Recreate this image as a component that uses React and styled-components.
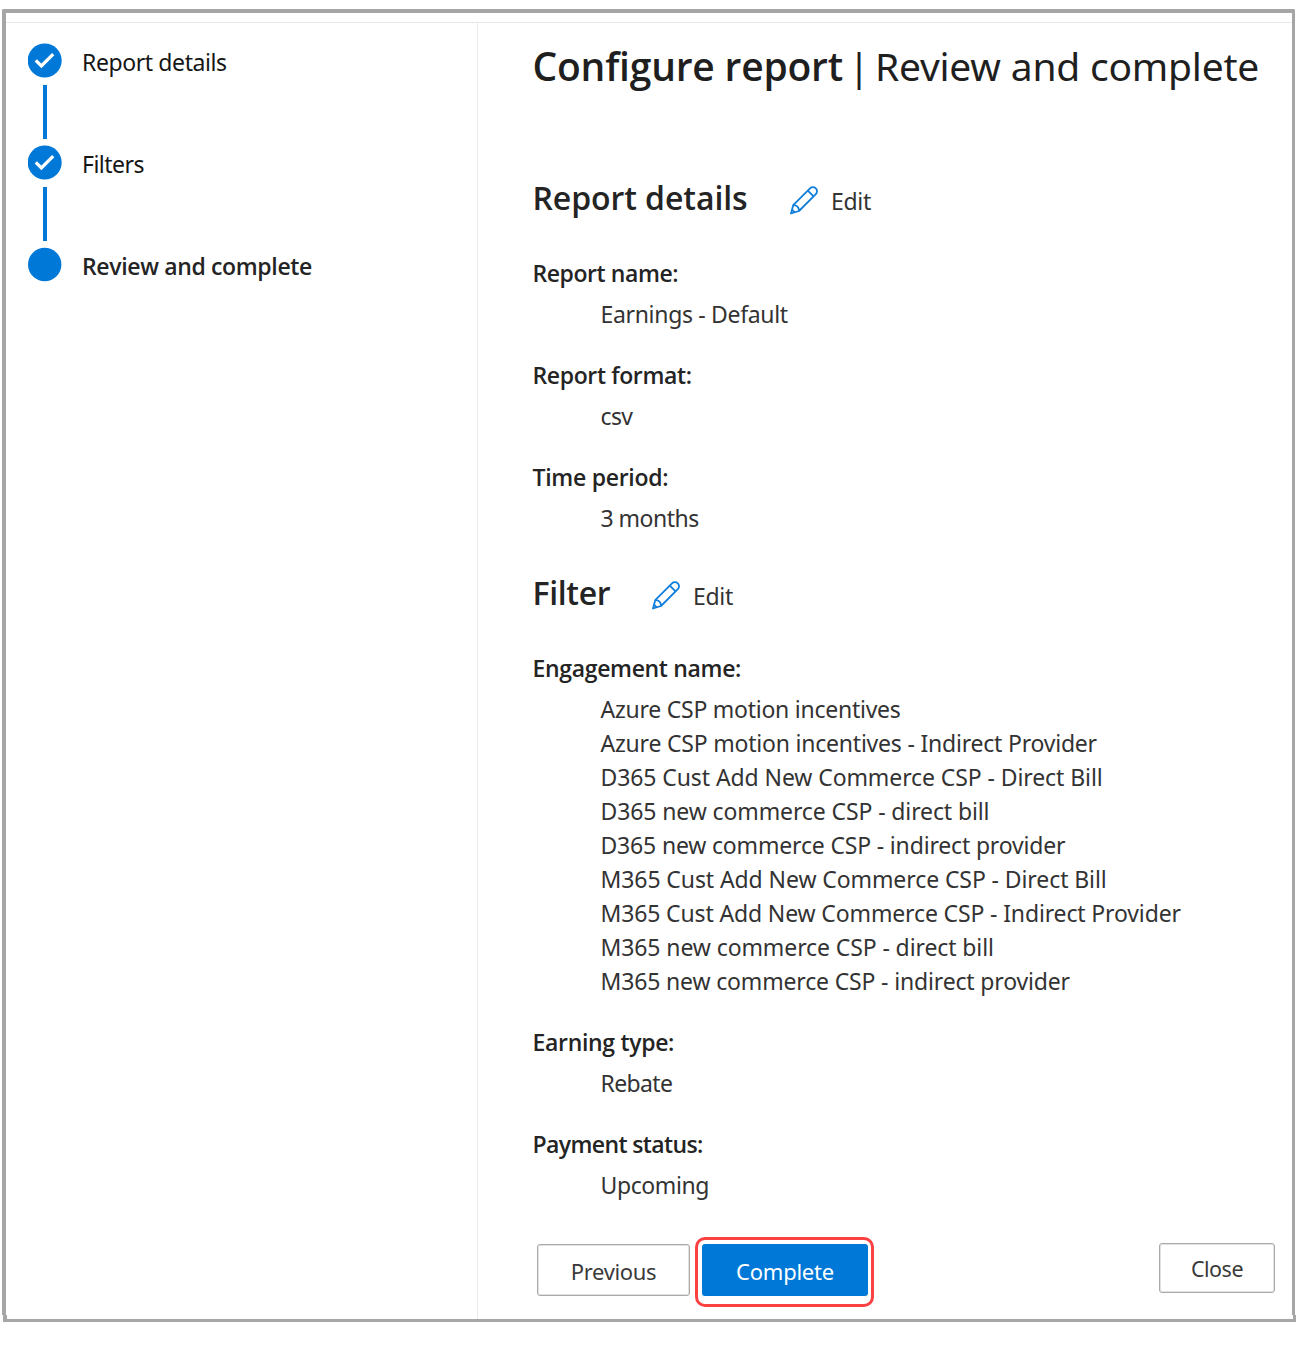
import React from "react";
import styled, { createGlobalStyle, css } from "styled-components";

const GlobalStyle = createGlobalStyle`
  *, *::before, *::after { box-sizing: border-box; }
  body { margin: 0; background: #fff; }
  h1, h2, dl, dt, dd, ol, ul { margin: 0; padding: 0; list-style: none; }
`;

const bodyText = css`
  font-size: 23px;
  line-height: 34px;
  font-weight: 400;
`;

const strongText = css`
  font-family: "Open Sans", "Noto Sans", sans-serif;
  font-weight: 600;
`;

const Page = styled.div`
  display: flex;
  flex-direction: column;
  width: 1298px;
  height: 1356px;
  padding: 9px 0 0 2px;
  overflow: hidden;
  background: #fff;
  color: #242424;
  font-family: "Noto Sans", "Open Sans", sans-serif;
`;

const Frame = styled.div`
  display: flex;
  flex-direction: column;
  flex: none;
  width: 1293px;
  height: 1306px;
  border: 4px solid #a6a6a6;
  border-right-width: 3px;
  border-bottom: 0;
  border-radius: 2px 2px 0 0;
`;

const FrameFoot = styled.div`
  flex: none;
  width: 1293px;
  height: 7px;
  margin-left: 1px;
  border: 3px solid #a6a6a6;
  border-left-width: 4px;
  border-top: 0;
`;

const TopStrip = styled.div`
  flex: none;
  height: 10px;
  border-bottom: 1px solid #e8e8e8;
`;

const Columns = styled.div`
  display: flex;
  flex: 1;
`;

const Sidebar = styled.nav`
  flex: none;
  width: 472px;
  margin-bottom: -4px;
  padding: 20px 0 0 22px;
  border-right: 1px solid #eaeaea;
`;

const Step = styled.li`
  display: flex;
  height: 102px;
`;

const Rail = styled.div`
  display: flex;
  flex-direction: column;
  align-items: center;
  width: 34px;
  margin-right: 20px;
`;

const Marker = styled.svg`
  display: block;
  width: 34px;
  height: 35px;
`;

const Connector = styled.div`
  width: 4px;
  height: 54px;
  margin-top: 6.5px;
  background: #0078d7;
`;

const StepLabel = styled.span`
  ${bodyText}
  padding-top: 2px;
  ${(p) => p.$current && strongText}
  letter-spacing: ${(p) => p.$track}px;
  color: ${(p) => (p.$current ? "#242424" : "#161616")};
  white-space: nowrap;
`;

const Main = styled.main`
  display: flex;
  flex-direction: column;
  flex: 1;
  padding: 13px 17px 0 54.5px;
`;

const Title = styled.h1`
  display: flex;
  height: 60px;
  font-size: 39px;
  line-height: 60px;
  font-weight: 400;
  color: #1f1f1f;
  white-space: nowrap;
`;

const TitlePart = styled.span`
  ${(p) => p.$strong && strongText}
  letter-spacing: ${(p) => p.$track}px;
`;

const TitleBar = styled.span`
  width: 24px;
  margin: 0 4px;
  text-align: center;
`;

const Section = styled.section`
  margin-top: ${(p) => p.$top}px;
`;

const SectionHead = styled.div`
  display: flex;
  align-items: flex-start;
  height: 48px;
  margin-bottom: 34px;
`;

const SectionTitle = styled.h2`
  ${strongText}
  font-size: 32px;
  line-height: 48px;
  letter-spacing: ${(p) => p.$track}px;
  white-space: nowrap;
  width: ${(p) => p.$width}px;
`;

const EditButton = styled.button`
  ${bodyText}
  display: flex;
  gap: 12.5px;
  padding: 10px 0 0;
  border: 0;
  background: none;
  color: #333;
  font-family: inherit;
  letter-spacing: -0.3px;
`;

const PencilSvg = styled.svg`
  display: block;
  width: 30px;
  height: 30px;
  margin-top: 1.5px;
`;

const Field = styled.div`
  & + & { margin-top: 27px; }
`;

const FieldName = styled.dt`
  ${bodyText}
  ${strongText}
  letter-spacing: ${(p) => p.$track}px;
  margin-bottom: 7px;
`;

const FieldValue = styled.dd`
  ${bodyText}
  padding-left: 68px;
  color: #333;
  letter-spacing: ${(p) => p.$track}px;
  white-space: nowrap;
`;

const Actions = styled.div`
  display: flex;
  align-items: flex-start;
  margin-top: 42px;
  padding-left: 4.5px;
`;

const Button = styled.button`
  display: flex;
  align-items: center;
  justify-content: center;
  width: ${(p) => p.$width}px;
  height: ${(p) => p.$height}px;
  padding: ${(p) => p.$nudge || 0}px 0 0;
  border: ${(p) => (p.$primary ? "2px solid #0078d7" : "1.5px solid #a9a9a9")};
  box-shadow: ${(p) => (p.$primary ? "none" : "inset 0 0 0 1px #e2e2e2")};
  border-radius: 3px;
  background: ${(p) => (p.$primary ? "#0078d7" : "#fff")};
  color: ${(p) => (p.$primary ? "#fff" : "#3a3a3a")};
  font-family: inherit;
  font-size: ${(p) => p.$size || 22}px;
  line-height: 32px;
  letter-spacing: ${(p) => p.$track}px;
`;

const Highlight = styled.div`
  display: flex;
  width: 179px;
  height: 70px;
  margin: -7px auto 0 5px;
  padding: 4px 3px 4px 4px;
  border: 3px solid #fb4242;
  border-radius: 10px;
`;

const CloseSlot = styled.div`
  margin-top: -1px;
`;

function StepMarker({ done }) {
  return (
    <Marker viewBox="0 0 34 35">
      <circle cx="16.7" cy="17.5" r={done ? 17 : 16.7} fill="#0078d7" />
      {done && <path d="M7.8 17.4 13.4 23 25.2 11.2" fill="none" stroke="#fff" strokeWidth="3.3" />}
    </Marker>
  );
}

function Pencil() {
  return (
    <PencilSvg viewBox="0 0 30 30" fill="none" stroke="#0f7fdb" strokeWidth="1.8" strokeLinejoin="round">
      <path d="M2 27.5 4.2 19.2 21 2.4a3.9 3.9 0 0 1 5.8 5.8L10 25 2 27.5Z" />
      <path d="M4.2 19.2a5.2 5.2 0 0 1 5.8 5.8M18.8 4.6l5.8 5.8M3 23.6l2.8 2.8" />
    </PencilSvg>
  );
}

const steps = [
  { label: "Report details", track: -0.4, done: true },
  { label: "Filters", track: -0.53, done: true },
  { label: "Review and complete", track: -0.35, current: true },
];

const sections = [
  {
    title: "Report details", track: -0.07, width: 256, top: 78,
    fields: [
      { name: "Report name:", track: -0.43, values: [["Earnings - Default", -0.32]] },
      { name: "Report format:", track: -0.37, values: [["csv", -0.65]] },
      { name: "Time period:", track: -0.28, values: [["3 months", -0.51]] },
    ],
  },
  {
    title: "Filter", track: -0.35, width: 118, top: 34,
    fields: [
      {
        name: "Engagement name:", track: -0.33,
        values: [
          ["Azure CSP motion incentives", -0.25],
          ["Azure CSP motion incentives - Indirect Provider", -0.21],
          ["D365 Cust Add New Commerce CSP - Direct Bill", -0.09],
          ["D365 new commerce CSP - direct bill", -0.11],
          ["D365 new commerce CSP - indirect provider", -0.17],
          ["M365 Cust Add New Commerce CSP - Direct Bill", -0.09],
          ["M365 Cust Add New Commerce CSP - Indirect Provider", -0.14],
          ["M365 new commerce CSP - direct bill", -0.1],
          ["M365 new commerce CSP - indirect provider", -0.16],
        ],
      },
      { name: "Earning type:", track: -0.32, values: [["Rebate", -0.65]] },
      { name: "Payment status:", track: -0.62, values: [["Upcoming", -0.4]] },
    ],
  },
];

export default function App() {
  return (
    <Page>
      <GlobalStyle />
      <Frame>
        <TopStrip />
        <Columns>
          <Sidebar>
            <ol>
              {steps.map((s) => (
                <Step key={s.label}>
                  <Rail>
                    <StepMarker done={s.done} />
                    {s.done && <Connector />}
                  </Rail>
                  <StepLabel $current={s.current} $track={s.track}>{s.label}</StepLabel>
                </Step>
              ))}
            </ol>
          </Sidebar>
          <Main>
            <Title>
              <TitlePart $strong $track={-0.21}>Configure report</TitlePart>
              <TitleBar>|</TitleBar>
              <TitlePart $track={-0.22}>Review and complete</TitlePart>
            </Title>
            {sections.map((s) => (
              <Section key={s.title} $top={s.top}>
                <SectionHead>
                  <SectionTitle $track={s.track} $width={s.width}>{s.title}</SectionTitle>
                  <EditButton><Pencil />Edit</EditButton>
                </SectionHead>
                <dl>
                  {s.fields.map((f) => (
                    <Field key={f.name}>
                      <FieldName $track={f.track}>{f.name}</FieldName>
                      {f.values.map(([text, track]) => (
                        <FieldValue key={text} $track={track}>{text}</FieldValue>
                      ))}
                    </Field>
                  ))}
                </dl>
              </Section>
            ))}
            <Actions>
              <Button $width={153} $height={52} $track={-0.35} $nudge={1}>Previous</Button>
              <Highlight>
                <Button $primary $width={166} $height={52} $track={-0.23} $nudge={1}>Complete</Button>
              </Highlight>
              <CloseSlot>
                <Button $width={116} $height={50} $track={-0.48} $size={21.5} $nudge={2}>Close</Button>
              </CloseSlot>
            </Actions>
          </Main>
        </Columns>
      </Frame>
      <FrameFoot />
    </Page>
  );
}
